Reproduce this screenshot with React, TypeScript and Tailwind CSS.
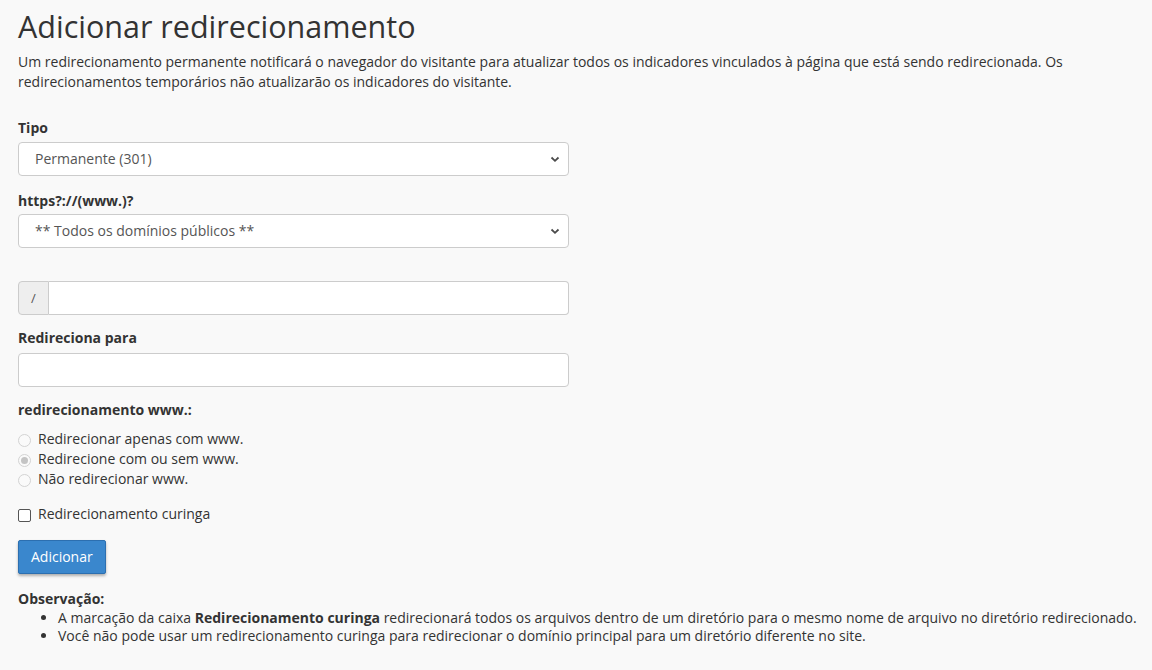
import React from 'react';

const Chevron = () => (
    <svg width="10" height="10" viewBox="0 0 10 10" className="absolute right-[8px] top-1/2 -translate-y-1/2">
        <path d="M1.5 3.5 L5 6.8 L8.5 3.5" fill="none" stroke="#4a4a4a" strokeWidth="1.8" />
    </svg>
);

const FakeSelect = ({ value }: { value: string }) => (
    <div className="relative h-[34px] w-full rounded-[4px] border border-[#cccccc] bg-white pl-[16px] flex items-center text-[14px] text-[#555555]">
        {value}
        <Chevron />
    </div>
);

const Radio = ({ label, checked }: { label: string; checked?: boolean }) => (
    <div className="flex items-center h-[20px]">
        <span className="w-[13px] h-[13px] rounded-full border border-[#d3d3d3] bg-[#fafafa] flex items-center justify-center mr-[7px] mt-[2px]">
            {checked && <span className="w-[7px] h-[7px] rounded-full bg-[#c4c4c4]" />}
        </span>
        <span>{label}</span>
    </div>
);

export default function App() {
    return (
        <div className="min-h-[670px] bg-[#f9f9f9] px-[18px] pt-[6px] text-[14px] leading-[20px] text-[#333333]" style={{ fontFamily: '"Open Sans", sans-serif' }}>
            <h1 className="text-[30.5px] leading-[40px] font-normal mb-[6px]">Adicionar redirecionamento</h1>
            <p className="w-[1100px] mb-[26px]">
                Um redirecionamento permanente notificará o navegador do visitante para atualizar todos os indicadores vinculados à página que está sendo redirecionada. Os redirecionamentos temporários não atualizarão os indicadores do visitante.
            </p>

            <div className="w-[551px]">
                <div className="mb-[15px]">
                    <div className="font-bold mb-[4px]">Tipo</div>
                    <FakeSelect value="Permanente (301)" />
                </div>
                <div className="mb-[33px]">
                    <div className="font-bold mb-[3px]">https?://(www.)?</div>
                    <FakeSelect value="** Todos os domínios públicos **" />
                </div>
                <div className="mb-[13px] flex h-[34px]">
                    <div className="w-[31px] rounded-l-[4px] border border-[#cccccc] bg-[#eeeeee] flex items-center justify-center text-[#555555] text-[13px]">/</div>
                    <div className="flex-1 rounded-r-[4px] border border-l-0 border-[#cccccc] bg-white" />
                </div>
                <div className="mb-[13px]">
                    <div className="font-bold mb-[5px]">Redireciona para</div>
                    <div className="h-[34px] rounded-[4px] border border-[#cccccc] bg-white" />
                </div>
                <div className="mb-[15px]">
                    <div className="font-bold mb-[9px]">redirecionamento www.:</div>
                    <Radio label="Redirecionar apenas com www." />
                    <Radio label="Redirecione com ou sem www." checked />
                    <Radio label="Não redirecionar www." />
                </div>
                <div className="flex items-center h-[20px] mb-[16px]">
                    <span className="w-[13px] h-[13px] rounded-[2px] border border-[#555555] bg-white mr-[7px] mt-[2px]" />
                    <span>Redirecionamento curinga</span>
                </div>
                <button className="h-[34px] px-[12px] rounded-[2px] border border-[#2c6fb0] bg-[#3a87cd] text-white text-[14px] shadow-[0_2px_3px_rgba(0,0,0,0.3)]">
                    Adicionar
                </button>
            </div>

            <div className="mt-[15px]">
                <div className="font-bold">Observação:</div>
                <ul className="list-disc pl-[40px] leading-[18px] whitespace-nowrap">
                    <li>A marcação da caixa <b>Redirecionamento curinga</b> redirecionará todos os arquivos dentro de um diretório para o mesmo nome de arquivo no diretório redirecionado.</li>
                    <li>Você não pode usar um redirecionamento curinga para redirecionar o domínio principal para um diretório diferente no site.</li>
                </ul>
            </div>
        </div>
    );
}
